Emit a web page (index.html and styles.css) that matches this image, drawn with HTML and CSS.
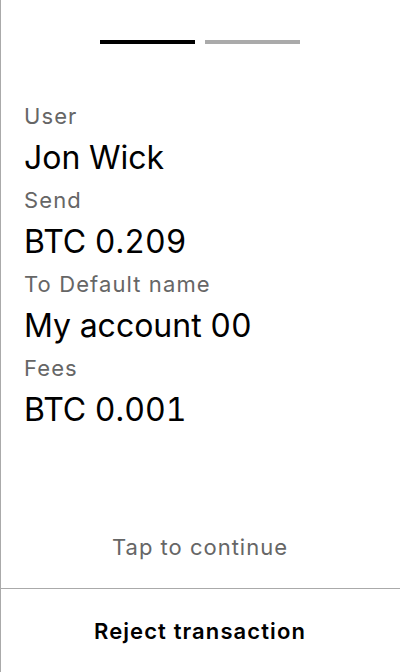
FILE: index.html
```html
<!DOCTYPE html>
<html>
<head>
<meta charset="utf-8">
<link rel="stylesheet" href="styles.css">
</head>
<body>
<div class="screen">
  <div class="progress">
    <div class="bar bar-active"></div>
    <div class="bar"></div>
  </div>
  <div class="details">
    <div class="label">User</div>
    <div class="value">Jon Wick</div>
    <div class="label">Send</div>
    <div class="value">BTC 0.209</div>
    <div class="label">To Default name</div>
    <div class="value">My account 00</div>
    <div class="label">Fees</div>
    <div class="value">BTC 0.001</div>
  </div>
  <div class="hint">Tap to continue</div>
  <div class="footer">Reject transaction</div>
</div>
</body>
</html>
```
FILE: styles.css
```css
html, body {
  margin: 0;
  padding: 0;
  background: #fff;
}
.screen {
  box-sizing: border-box;
  width: 400px;
  height: 672px;
  box-shadow: inset 1px 0 0 #aaaaaa;
  display: flex;
  flex-direction: column;
  font-family: Inter, "Noto Sans", sans-serif;
}
.progress {
  display: flex;
  justify-content: center;
  gap: 10px;
  padding-top: 40px;
}
.bar {
  width: 95px;
  height: 4px;
  background: #aaaaaa;
}
.bar-active {
  background: #000;
}
.details {
  display: flex;
  flex-direction: column;
  padding: 54px 0 0 24px;
}
.label {
  font-size: 22px;
  line-height: 36px;
  letter-spacing: 1.1px;
  color: #666666;
}
.value {
  font-size: 32px;
  line-height: 48px;
  font-variant-numeric: tabular-nums;
  color: #000;
}
.hint {
  margin-top: auto;
  text-align: center;
  font-size: 22px;
  line-height: 40px;
  letter-spacing: 1px;
  color: #666666;
  padding-bottom: 21px;
}
.footer {
  border-top: 1px solid #aaaaaa;
  height: 84px;
  box-sizing: border-box;
  display: flex;
  align-items: center;
  justify-content: center;
  font-size: 22px;
  font-weight: 600;
  letter-spacing: 1.1px;
  color: #000;
}
```
